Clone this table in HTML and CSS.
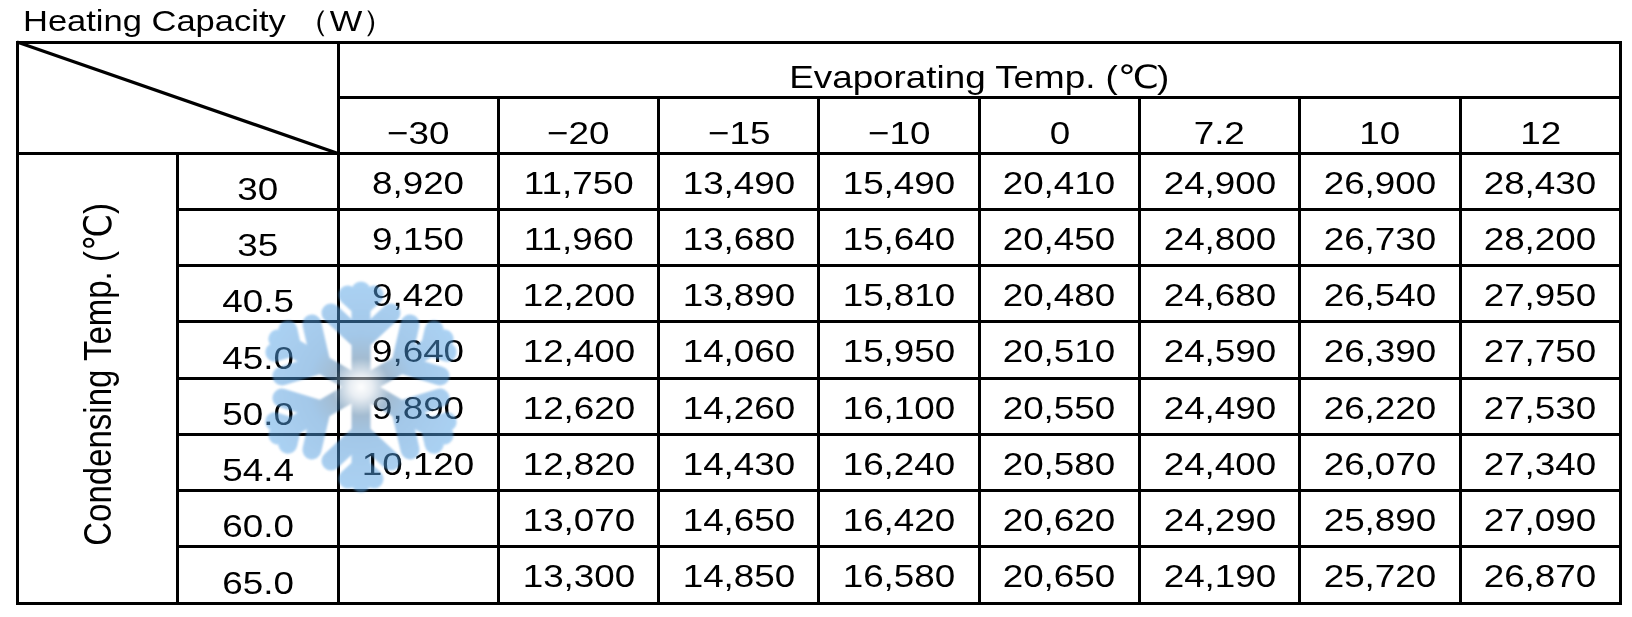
FILE: index.html
```html
<!DOCTYPE html>
<html lang="en">
<head>
<meta charset="utf-8">
<title>Heating Capacity (W)</title>
<link rel="stylesheet" href="styles.css">
</head>
<body>
<div class="page">
  <div class="title"><span class="sx sx-left">Heating Capacity （W）</span></div>
  <table class="cap">
    <colgroup>
      <col><col><col><col><col><col><col><col><col><col>
    </colgroup>
    <tbody>
      <tr class="hrow">
        <td class="corner" colspan="2" rowspan="2">
          <svg class="diag" preserveAspectRatio="none" viewBox="0 0 100 100"><line x1="0" y1="0" x2="100" y2="100" vector-effect="non-scaling-stroke"/></svg>
        </td>
        <td class="hd" colspan="8"><span class="sx">Evaporating Temp. (<span class="deg">℃</span>)</span></td>
      </tr>
      <tr class="hrow">
        <td class="hd"><span class="sx">−30</span></td>
        <td class="hd"><span class="sx">−20</span></td>
        <td class="hd"><span class="sx">−15</span></td>
        <td class="hd"><span class="sx">−10</span></td>
        <td class="hd"><span class="sx">0</span></td>
        <td class="hd"><span class="sx">7.2</span></td>
        <td class="hd"><span class="sx">10</span></td>
        <td class="hd"><span class="sx">12</span></td>
      </tr>
      <tr>
        <td class="vlabel" rowspan="8"><span class="vt">Condensing Temp. (℃)</span></td>
        <td class="lb"><span class="sx">30</span></td>
        <td class="v"><span class="sx">8,920</span></td><td class="v"><span class="sx">11,750</span></td><td class="v"><span class="sx">13,490</span></td><td class="v"><span class="sx">15,490</span></td><td class="v"><span class="sx">20,410</span></td><td class="v"><span class="sx">24,900</span></td><td class="v"><span class="sx">26,900</span></td><td class="v"><span class="sx">28,430</span></td>
      </tr>
      <tr>
        <td class="lb"><span class="sx">35</span></td>
        <td class="v"><span class="sx">9,150</span></td><td class="v"><span class="sx">11,960</span></td><td class="v"><span class="sx">13,680</span></td><td class="v"><span class="sx">15,640</span></td><td class="v"><span class="sx">20,450</span></td><td class="v"><span class="sx">24,800</span></td><td class="v"><span class="sx">26,730</span></td><td class="v"><span class="sx">28,200</span></td>
      </tr>
      <tr>
        <td class="lb"><span class="sx">40.5</span></td>
        <td class="v"><span class="sx">9,420</span></td><td class="v"><span class="sx">12,200</span></td><td class="v"><span class="sx">13,890</span></td><td class="v"><span class="sx">15,810</span></td><td class="v"><span class="sx">20,480</span></td><td class="v"><span class="sx">24,680</span></td><td class="v"><span class="sx">26,540</span></td><td class="v"><span class="sx">27,950</span></td>
      </tr>
      <tr>
        <td class="lb"><span class="sx">45.0</span></td>
        <td class="v"><span class="sx">9,640</span></td><td class="v"><span class="sx">12,400</span></td><td class="v"><span class="sx">14,060</span></td><td class="v"><span class="sx">15,950</span></td><td class="v"><span class="sx">20,510</span></td><td class="v"><span class="sx">24,590</span></td><td class="v"><span class="sx">26,390</span></td><td class="v"><span class="sx">27,750</span></td>
      </tr>
      <tr>
        <td class="lb"><span class="sx">50.0</span></td>
        <td class="v"><span class="sx">9,890</span></td><td class="v"><span class="sx">12,620</span></td><td class="v"><span class="sx">14,260</span></td><td class="v"><span class="sx">16,100</span></td><td class="v"><span class="sx">20,550</span></td><td class="v"><span class="sx">24,490</span></td><td class="v"><span class="sx">26,220</span></td><td class="v"><span class="sx">27,530</span></td>
      </tr>
      <tr>
        <td class="lb"><span class="sx">54.4</span></td>
        <td class="v"><span class="sx">10,120</span></td><td class="v"><span class="sx">12,820</span></td><td class="v"><span class="sx">14,430</span></td><td class="v"><span class="sx">16,240</span></td><td class="v"><span class="sx">20,580</span></td><td class="v"><span class="sx">24,400</span></td><td class="v"><span class="sx">26,070</span></td><td class="v"><span class="sx">27,340</span></td>
      </tr>
      <tr>
        <td class="lb"><span class="sx">60.0</span></td>
        <td class="v"></td><td class="v"><span class="sx">13,070</span></td><td class="v"><span class="sx">14,650</span></td><td class="v"><span class="sx">16,420</span></td><td class="v"><span class="sx">20,620</span></td><td class="v"><span class="sx">24,290</span></td><td class="v"><span class="sx">25,890</span></td><td class="v"><span class="sx">27,090</span></td>
      </tr>
      <tr>
        <td class="lb"><span class="sx">65.0</span></td>
        <td class="v"></td><td class="v"><span class="sx">13,300</span></td><td class="v"><span class="sx">14,850</span></td><td class="v"><span class="sx">16,580</span></td><td class="v"><span class="sx">20,650</span></td><td class="v"><span class="sx">24,190</span></td><td class="v"><span class="sx">25,720</span></td><td class="v"><span class="sx">26,870</span></td>
      </tr>
    </tbody>
  </table>

  <svg class="flake" viewBox="-110 -110 220 220" aria-hidden="true">
    <defs>
      <radialGradient id="fg" cx="0" cy="0" r="110" gradientUnits="userSpaceOnUse">
        <stop offset="0" stop-color="#ffffff"/>
        <stop offset="0.1" stop-color="#d4dee8"/>
        <stop offset="0.26" stop-color="#4a7aa4"/>
        <stop offset="0.48" stop-color="#4a92d4"/>
        <stop offset="1" stop-color="#5ba8ea"/>
      </radialGradient>
      <filter id="soft" x="-10%" y="-10%" width="120%" height="120%">
        <feGaussianBlur stdDeviation="0.9"/>
      </filter>
      <g id="arm">
        <line x1="0" y1="0" x2="0" y2="-96"/>
        <line x1="0" y1="-46" x2="-30" y2="-74"/>
        <line x1="0" y1="-46" x2="30" y2="-74"/>
        <line x1="0" y1="-80" x2="-13" y2="-92"/>
        <line x1="0" y1="-80" x2="13" y2="-92"/>
      </g>
    </defs>
    <g class="flake-arms" stroke="url(#fg)" filter="url(#soft)">
      <use href="#arm"/>
      <use href="#arm" transform="rotate(60)"/>
      <use href="#arm" transform="rotate(120)"/>
      <use href="#arm" transform="rotate(180)"/>
      <use href="#arm" transform="rotate(240)"/>
      <use href="#arm" transform="rotate(300)"/>
    </g>
  </svg>
</div>
</body>
</html>
```

FILE: styles.css
```css
html, body {
  margin: 0;
  padding: 0;
  background: #ffffff;
}

.page {
  position: relative;
  width: 1632px;
  height: 617px;
  font-family: "Liberation Sans", Arial, "DejaVu Sans", sans-serif;
  color: #000;
}

.title {
  box-sizing: border-box;
  height: 40.5px;
  padding: 2px 0 0 23px;
  font-size: 30px;
  line-height: 38.5px;
  white-space: nowrap;
}

.sx {
  display: inline-block;
  transform: scaleX(1.15);
  transform-origin: 50% 50%;
  white-space: nowrap;
}

.sx-left {
  transform-origin: 0 50%;
}

.cap {
  margin-left: 16px;
  width: 1606px;
  table-layout: fixed;
  border-collapse: separate;
  border-spacing: 0;
  border-top: 3px solid #000;
  border-left: 3px solid #000;
}

.cap col {
  width: 10%;
}

.cap tr {
  height: 56.25px;
}

.cap tr.hrow {
  height: 55.5px;
}

.cap td {
  border-right: 3px solid #000;
  border-bottom: 3px solid #000;
  padding: 0;
  text-align: center;
  font-size: 32px;
  line-height: 36px;
  white-space: nowrap;
}

.corner {
  position: relative;
}

.diag {
  position: absolute;
  left: -2px;
  top: -2px;
  width: calc(100% + 3.5px);
  height: calc(100% + 3.5px);
  overflow: visible;
}

.diag line {
  stroke: #000;
  stroke-width: 3.2px;
}

.cap td.hd {
  vertical-align: bottom;
  padding-bottom: 1px;
}

.deg {
  letter-spacing: -2px;
}

.cap td.lb {
  vertical-align: bottom;
  padding-bottom: 1px;
}

.cap td.v {
  vertical-align: top;
  padding-top: 10px;
}

.vlabel {
  vertical-align: middle;
}

.vt {
  display: inline-block;
  writing-mode: vertical-rl;
  text-orientation: sideways;
  transform: rotate(180deg) scaleX(1.15);
  font-size: 33px;
  line-height: 36px;
  white-space: nowrap;
}

.flake {
  position: absolute;
  left: 251px;
  top: 277px;
  width: 220px;
  height: 220px;
  pointer-events: none;
}

.flake-arms {
  fill: none;
  stroke-width: 19px;
  stroke-linecap: round;
  opacity: 0.5;
}
```
